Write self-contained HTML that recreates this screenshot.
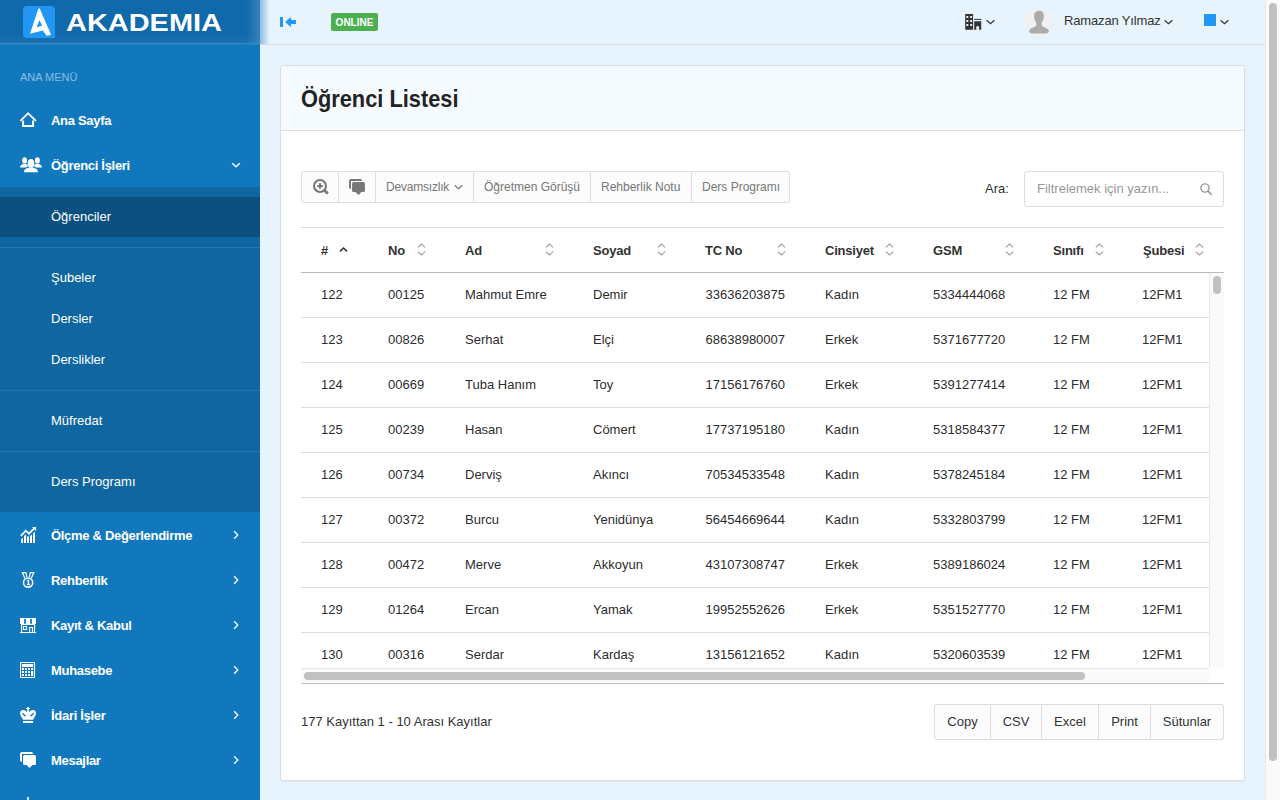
<!DOCTYPE html>
<html lang="tr">
<head>
<meta charset="utf-8">
<title>Öğrenci Listesi</title>
<style>
*{box-sizing:border-box;margin:0;padding:0}
html,body{width:1280px;height:800px;overflow:hidden}
body{font-family:"Liberation Sans",sans-serif;font-size:13px;color:#333;background:#e8f4fd;position:relative}
.abs{position:absolute}
/* ---------- sidebar ---------- */
#sidebar{position:absolute;left:0;top:0;width:260px;height:800px;background:#1278be;overflow:hidden}
#brand{position:absolute;left:0;top:0;width:260px;height:45px;background:linear-gradient(to bottom,#1069ab 0,#1069ab 35px,#1b73b1 43px,#3486c4 43px,#3486c4 44px,#2280c2 44px,#2280c2 45px)}
#brand .glow{position:absolute;right:0;top:0;width:14px;height:43px;background:linear-gradient(to right,rgba(80,150,200,0),rgba(80,150,200,.55))}
#logo{position:absolute;left:23px;top:6px;width:32px;height:32px;background:#2196f3;border-radius:4px 4px 0 4px}
#btxt{position:absolute;left:66px;top:6px}
.navlabel{position:absolute;left:20px;top:70px;font-size:11px;line-height:14px;color:rgba(255,255,255,.5);letter-spacing:0}
.item{position:absolute;left:0;width:260px;height:44px;color:#fff;font-weight:bold;font-size:13px;line-height:46px;padding-left:51px;white-space:nowrap;letter-spacing:-.3px}
.item svg.ic{position:absolute;left:20px;top:14px}
.item svg.ch{position:absolute;left:231px;top:18px}
.item svg.ch.r{left:232px;top:17px}
#sub{position:absolute;left:0;top:187px;width:260px;height:325px;background:rgba(0,0,0,.15)}
.sitem{position:absolute;left:0;width:260px;height:40px;line-height:40px;padding-left:51px;color:#fff;font-size:13px;white-space:nowrap}
.sitem.act{background:rgba(0,0,0,.21)}
.sdiv{position:absolute;left:0;width:260px;height:1px;background:rgba(255,255,255,.1)}
/* ---------- navbar ---------- */
#navbar{position:absolute;left:260px;top:0;width:1005px;height:45px;border-bottom:1px solid #ddd;background:#e8f4fd}
#navshadow{position:absolute;left:260px;top:0;width:10px;height:44px;background:linear-gradient(to right,rgba(110,170,225,.75),rgba(110,170,225,0))}
.badge{position:absolute;left:331px;top:13px;width:47px;height:18px;background:#4caf50;border-radius:2px;color:#fff;font-size:10px;font-weight:bold;line-height:20px;text-align:center}
#avatar{left:1025px;top:8px;width:28px;height:28px}
/* ---------- page scrollbar ---------- */
#pscroll{position:absolute;left:1265px;top:0;width:15px;height:800px;background:#fafafa;border-left:1px solid #e8e8e8}
#pscroll i{position:absolute;left:3px;top:3px;width:8px;height:758px;border-radius:4px;background:#c1c1c1}
/* ---------- panel ---------- */
#panel{position:absolute;left:280px;top:65px;width:965px;height:716px;background:#fff;border:1px solid #ddd;border-radius:3px;box-shadow:0 1px 1px rgba(0,0,0,.05)}
#phead{position:absolute;left:0;top:0;width:963px;height:65px;background:#f4fafe;border-bottom:1px solid #ddd;border-radius:3px 3px 0 0}
#ptitle{position:absolute;left:20px;top:17px;font-size:24px;line-height:32px;font-weight:bold;color:#222;white-space:nowrap;transform:scaleX(.908);transform-origin:0 0}

/* ---------- toolbar ---------- */
.tb{position:absolute;top:171px;height:32px;background:#fcfcfc;border:1px solid #ddd;border-left:0;font-size:12px;line-height:30px;color:#777;white-space:nowrap;text-align:left;padding-left:10px}
.tb.first{border-left:1px solid #ddd;border-radius:3px 0 0 3px}
.tb.last{border-radius:0 3px 3px 0}
.tb svg{position:absolute}
#srch{position:absolute;left:1024px;top:171px;width:200px;height:36px;border:1px solid #ddd;border-radius:3px;background:#fff;font-size:13px;line-height:34px;color:#999;padding-left:12px;white-space:nowrap}
/* ---------- table ---------- */
#ttop{position:absolute;left:301px;top:227px;width:923px;height:1px;background:#ddd}
#thb{position:absolute;left:301px;top:272px;width:923px;height:1px;background:#bbb}
.th{position:absolute;top:228px;height:44px;line-height:45px;font-weight:bold;font-size:13px;color:#333;white-space:nowrap;letter-spacing:-.2px}
.srt{position:absolute;top:243px}
#tbody{position:absolute;left:301px;top:273px;width:908px;height:395px;overflow:hidden;background:#fff}
.tr{position:absolute;left:0;width:908px;height:45px;border-bottom:1px solid #ddd}
.td{position:absolute;top:0;line-height:43px;font-size:13px;color:#2d2d2d;white-space:nowrap}
#vs{position:absolute;left:1209px;top:273px;width:15px;height:395px;background:#fafafa;border-left:1px solid #e8e8e8}
#vs i{position:absolute;left:3px;top:3px;width:8px;height:18px;border-radius:4px;background:#c1c1c1}
#hs{position:absolute;left:301px;top:668px;width:908px;height:15px;background:#fafafa;border-top:1px solid #e8e8e8}
#hs i{position:absolute;left:3px;top:3px;width:781px;height:8px;border-radius:4px;background:#c1c1c1}
#tbot{position:absolute;left:301px;top:683px;width:923px;height:1px;background:#bbb}
#info{position:absolute;left:301px;top:713px;line-height:18px;font-size:13px;color:#333;white-space:nowrap}
.fb{position:absolute;top:704px;height:36px;background:#fcfcfc;border:1px solid #ddd;border-left:0;font-size:13px;line-height:34px;color:#333;text-align:center;white-space:nowrap}
.fb.first{border-left:1px solid #ddd;border-radius:3px 0 0 3px}
.fb.last{border-radius:0 3px 3px 0}
</style>
</head>
<body>
<div id="sidebar">
  <div id="brand"><div class="glow"></div><div id="logo"><svg width="32" height="32" viewBox="0 0 32 32"><path fill="#fff" fill-rule="evenodd" d="M15.3 2.8 L7 27.75 L19.8 24.4 L23.9 30.1 L28.1 28.7 L16.6 2.3 Z M16.4 14.2 L13.6 21.2 L19.2 19.8 Z"/></svg></div><svg id="btxt" width="170" height="30" viewBox="0 0 170 30"><text x="0" y="24.6" font-family="Liberation Sans, sans-serif" font-weight="bold" font-size="24.2" fill="#fff" textLength="156" lengthAdjust="spacingAndGlyphs">AKADEMIA</text></svg></div>
  <div class="navlabel">ANA MENÜ</div>

  <div class="item" style="top:98px"><svg class="ic" width="17" height="16" viewBox="0 0 17 16"><path d="M0.3 8.9 L8.1 1.3 L15.9 8.9" stroke="#fff" stroke-width="1.8" fill="none"/><path d="M3.1 8.4 V14 H13.1 V8.4" stroke="#fff" stroke-width="2" fill="none"/></svg>Ana Sayfa</div>
  <div class="item" style="top:143px"><svg class="ic" width="22" height="16" viewBox="0 0 22 16"><g fill="#fff"><ellipse cx="4.6" cy="3.4" rx="2.4" ry="3.2"/><path d="M0 10.5 C0 8.2 2 7.6 3.3 7 L5.9 7 C7 7.5 8 7.8 8 9 L6 10.5 Z"/><ellipse cx="17.4" cy="3.4" rx="2.4" ry="3.2"/><path d="M22 10.5 C22 8.2 20 7.6 18.7 7 L16.1 7 C15 7.5 14 7.8 14 9 L16 10.5 Z"/><ellipse cx="11" cy="6.3" rx="3.3" ry="4.4"/><path d="M4 15.2 C4 11.8 6.5 11.4 9 10.4 L13 10.4 C15.5 11.4 18 11.8 18 15.2 Z"/></g></svg>Öğrenci İşleri<svg class="ch" width="10" height="8" viewBox="0 0 10 8"><path d="M1.2 2.2 L5 5.8 L8.8 2.2" stroke="#fff" stroke-width="1.3" fill="none"/></svg></div>
  <div id="sub">
    <div class="sitem act" style="top:10px">Öğrenciler</div>
    <div class="sdiv" style="top:60px"></div>
    <div class="sitem" style="top:71px">Şubeler</div>
    <div class="sitem" style="top:112px">Dersler</div>
    <div class="sitem" style="top:153px">Derslikler</div>
    <div class="sdiv" style="top:203px"></div>
    <div class="sitem" style="top:214px">Müfredat</div>
    <div class="sdiv" style="top:264px"></div>
    <div class="sitem" style="top:275px">Ders Programı</div>
  </div>
  <div class="item" style="top:513px"><svg class="ic" width="17" height="16" viewBox="0 0 17 16"><g fill="#fff"><path d="M1 12.4 L3 10.6 V16 H1Z"/><path d="M4 9.1 L6 7.6 V16 H4Z"/><path d="M7 8.8 L9 10 V16 H7Z"/><path d="M10 9.1 L12 7.6 V16 H10Z"/><path d="M13 6.4 L15 4.6 V16 H13Z"/><path d="M12 0 H16.1 V4.1 Z"/></g><path d="M0.8 8.9 L5.9 3.6 L8.9 6.7 L14 1.6" stroke="#fff" stroke-width="1.7" fill="none"/></svg>Ölçme &amp; Değerlendirme<svg class="ch r" width="8" height="10" viewBox="0 0 8 10"><path d="M2.2 1.2 L5.8 5 L2.2 8.8" stroke="#fff" stroke-width="1.3" fill="none"/></svg></div>
  <div class="item" style="top:558px"><svg class="ic" width="17" height="17" viewBox="0 0 17 17"><circle cx="8.1" cy="10.6" r="4.6" stroke="#fff" stroke-width="1.5" fill="none"/><path d="M2.3 0.6 L4.9 6.3 M5.9 0.6 L6.9 5.2 M13.9 0.6 L11.3 6.3 M10.3 0.6 L9.3 5.2" stroke="#fff" stroke-width="1.2" fill="none"/><path d="M1.8 0.7 H6.3 M9.9 0.7 H14.4" stroke="#fff" stroke-width="1.2"/><path d="M6.9 9.2 L8.5 8.3 V12.6 M6.9 12.5 H10" stroke="#fff" stroke-width="1.3" fill="none"/></svg>Rehberlik<svg class="ch r" width="8" height="10" viewBox="0 0 8 10"><path d="M2.2 1.2 L5.8 5 L2.2 8.8" stroke="#fff" stroke-width="1.3" fill="none"/></svg></div>
  <div class="item" style="top:603px"><svg class="ic" width="17" height="17" viewBox="0 0 17 17"><g fill="#fff"><path fill-rule="evenodd" d="M0 1 H16 V7 H0 Z M4.1 2.1 H5.9 V6.7 H4.1 Z M10.1 2.1 H11.9 V6.7 H10.1 Z"/><rect x="1" y="7" width="1.1" height="8"/><rect x="14" y="7" width="1.1" height="8"/><rect x="1" y="7" width="14" height="1"/><path fill-rule="evenodd" d="M2.9 9 H7.1 V12.9 H2.9 Z M3.95 9.95 H6.05 V11.9 H3.95 Z"/><path d="M9.05 15 V9.9 H13.1 V15 H11.9 V11.1 H10.1 V15 Z"/><rect x="0" y="15" width="16" height="1.05"/></g></svg>Kayıt &amp; Kabul<svg class="ch r" width="8" height="10" viewBox="0 0 8 10"><path d="M2.2 1.2 L5.8 5 L2.2 8.8" stroke="#fff" stroke-width="1.3" fill="none"/></svg></div>
  <div class="item" style="top:648px"><svg class="ic" width="17" height="17" viewBox="0 0 17 17"><rect x="0.55" y="0.45" width="13.95" height="15" rx="0.7" stroke="#fff" stroke-width="1.1" fill="none"/><g fill="#fff"><rect x="2" y="2" width="11.1" height="3"/><rect x="2" y="6" width="2" height="1.9"/><rect x="5" y="6" width="2" height="1.9"/><rect x="8" y="6" width="2" height="1.9"/><rect x="11" y="6" width="2.1" height="1.9"/><rect x="2" y="9" width="2" height="1.9"/><rect x="5" y="9" width="2" height="1.9"/><rect x="8" y="9" width="2" height="1.9"/><rect x="11" y="9" width="2.1" height="5"/><rect x="2" y="12" width="2" height="2"/><rect x="5" y="12" width="2" height="2"/><rect x="8" y="12" width="2" height="2"/></g></svg>Muhasebe<svg class="ch r" width="8" height="10" viewBox="0 0 8 10"><path d="M2.2 1.2 L5.8 5 L2.2 8.8" stroke="#fff" stroke-width="1.3" fill="none"/></svg></div>
  <div class="item" style="top:693px"><svg class="ic" width="17" height="17" viewBox="0 0 17 17"><g fill="#fff"><path fill-rule="evenodd" d="M3.05 12.65 C2.4 10.4 0 9 0.05 6.2 C0.1 4.2 1.6 3.1 3.1 3.1 C4.7 3.1 5.9 3.9 6.7 5 L7.25 4.2 V2 H5.9 V0.95 H7.25 V0 H8.9 V0.95 H10 V2 H8.9 V4.2 L9.4 5 C10.2 3.9 11.4 3.1 13 3.1 C14.5 3.1 16 4.2 16.05 6.2 C16.1 9 13.7 10.4 13.05 12.65 Z M2.91 5.74 L6.06 8.74 L5.14 9.66 L1.99 6.66 Z M13.19 5.74 L10.04 8.74 L10.96 9.66 L14.11 6.66 Z"/><rect x="3.05" y="14" width="10.05" height="1.95"/></g></svg>İdari İşler<svg class="ch r" width="8" height="10" viewBox="0 0 8 10"><path d="M2.2 1.2 L5.8 5 L2.2 8.8" stroke="#fff" stroke-width="1.3" fill="none"/></svg></div>
  <div class="item" style="top:738px"><svg class="ic" width="17" height="17" viewBox="0 0 17 17"><g fill="#fff"><path d="M2 0 H11.3 Q13 0 13.1 2 H2 V10 Q0 10 0 8 V2 Q0 0 2 0 Z"/><rect x="3.05" y="3.05" width="12.9" height="9.95" rx="1.6"/><path d="M6.5 12.9 L9.5 16.1 L12.4 12.9 Z"/></g></svg>Mesajlar<svg class="ch r" width="8" height="10" viewBox="0 0 8 10"><path d="M2.2 1.2 L5.8 5 L2.2 8.8" stroke="#fff" stroke-width="1.3" fill="none"/></svg></div>
  <div class="item" style="top:783px"><svg class="ic" width="16" height="16" viewBox="0 0 16 16"><rect x="7.2" y="0" width="1.6" height="6" fill="#fff"/></svg></div>
</div>
<div id="navbar"></div>
<div id="navshadow"></div>
<svg class="abs" style="left:280px;top:17px" width="17" height="10" viewBox="0 0 17 10"><g fill="#2196f3"><rect x="0" y="0" width="3" height="10"/><path d="M5.1 5.05 L10.95 0 V3.05 H16.05 V6.95 H10.95 V10.1 Z"/></g></svg>
<div class="badge">ONLINE</div>
<svg class="abs" style="left:965px;top:14px" width="17" height="16" viewBox="0 0 17 16"><g fill="#333"><path fill-rule="evenodd" d="M0.2 0.1 H8.1 V15.8 H0.2 Z M1.4 2.1 H3.3 V4.1 H1.4 Z M5.2 2.1 H7.1 V4.1 H5.2 Z M1.4 6.1 H3.3 V8.1 H1.4 Z M5.2 6.1 H7.1 V8.1 H5.2 Z M1.4 10.1 H3.3 V12.1 H1.4 Z M5.2 10.1 H7.1 V12.1 H5.2 Z"/><rect x="9.2" y="4.9" width="7" height="1"/><path d="M9.2 7.3 H16.2 V15.8 H14.1 V12.2 H11.3 V15.8 H9.2 Z"/></g></svg>
<svg class="abs chev" style="left:986px;top:19px" width="9" height="6" viewBox="0 0 9 6"><path d="M0.6 1.3 L4.5 4.7 L8.4 1.3" stroke="#333" stroke-width="1.2" fill="none"/></svg>
<div class="abs" id="avatar"><svg width="28" height="28" viewBox="0 0 28 28"><defs><clipPath id="avc"><circle cx="14" cy="14" r="14"/></clipPath></defs><circle cx="14" cy="14" r="14" fill="#f1f1f1"/><g clip-path="url(#avc)"><path fill="#acacac" d="M14 2.7 C17.4 2.7 18.9 5 18.9 8.2 C18.9 11 18 13.4 16.6 14.8 C16.5 17.2 16.7 18.2 18.6 19 C21 20 23.6 20.8 23.9 23.4 C23.9 24.6 23 25.5 21.5 25.5 H6.5 C5 25.5 4.1 24.6 4.1 23.4 C4.4 20.8 7 20 9.4 19 C11.3 18.2 11.5 17.2 11.4 14.8 C10 13.4 9.1 11 9.1 8.2 C9.1 5 10.6 2.7 14 2.7 Z"/></g></svg></div>
<div class="abs" style="left:1064px;top:12px;line-height:18px;font-size:13px;color:#333;white-space:nowrap;letter-spacing:-.15px">Ramazan Yılmaz</div>
<svg class="abs chev" style="left:1164px;top:19px" width="9" height="6" viewBox="0 0 9 6"><path d="M0.6 1.3 L4.5 4.7 L8.4 1.3" stroke="#333" stroke-width="1.2" fill="none"/></svg>
<div class="abs" style="left:1204px;top:14px;width:12px;height:12px;background:#2196f3"></div>
<svg class="abs chev" style="left:1220px;top:19px" width="9" height="6" viewBox="0 0 9 6"><path d="M0.6 1.3 L4.5 4.7 L8.4 1.3" stroke="#333" stroke-width="1.2" fill="none"/></svg>
<div id="pscroll"><i></i></div>
<div id="panel">
  <div id="phead"><div id="ptitle">Öğrenci Listesi</div></div>
</div>
<div class="tb first" style="left:301px;width:38px"><svg style="left:11px;top:7px" width="17" height="17" viewBox="0 0 17 17"><circle cx="7" cy="7" r="5.95" stroke="#777" stroke-width="2.1" fill="none"/><path d="M11.2 11.2 L14.9 14.6" stroke="#777" stroke-width="2.7"/><path d="M7 4.2 V9.8 M4.2 7 H9.8" stroke="#777" stroke-width="2"/></svg></div>
<div class="tb" style="left:339px;width:37px"><svg style="left:10px;top:7px" width="17" height="17" viewBox="0 0 17 17"><g fill="#777"><path d="M2 0 H11.3 Q13 0 13.1 2 H2 V10 Q0 10 0 8 V2 Q0 0 2 0 Z"/><rect x="3.05" y="3.05" width="12.9" height="9.95" rx="1.6"/><path d="M6.5 12.9 L9.5 16.1 L12.4 12.9 Z"/></g></svg></div>
<div class="tb" style="left:376px;width:98px"><span style="letter-spacing:-.2px">Devamsızlık</span><svg style="left:77.5px;top:12px" width="9" height="6" viewBox="0 0 9 6"><path d="M0.6 1.3 L4.5 4.7 L8.4 1.3" stroke="#777" stroke-width="1.2" fill="none"/></svg></div>
<div class="tb" style="left:474px;width:117px">Öğretmen Görüşü</div>
<div class="tb" style="left:591px;width:101px">Rehberlik Notu</div>
<div class="tb last" style="left:692px;width:98px">Ders Programı</div>
<div class="abs" style="left:985px;top:180px;line-height:18px;font-size:13px;color:#333">Ara:</div>
<div id="srch">Filtrelemek için yazın...<svg class="abs" style="left:175px;top:11px" width="12.5" height="12.5" viewBox="0 0 14 14"><circle cx="5.6" cy="5.6" r="4.6" stroke="#999" stroke-width="1.6" fill="none"/><path d="M9 9 L12.6 12.6" stroke="#999" stroke-width="1.9" stroke-linecap="round"/></svg></div>
<div id="ttop"></div>
<div class="th" style="left:321px">#</div>
<div class="th" style="left:388px">No</div>
<svg class="srt" style="left:416.5px" width="9" height="13" viewBox="0 0 9 13"><path d="M0.8 4.4 L4.5 1 L8.2 4.4 M0.8 8.6 L4.5 12 L8.2 8.6" stroke="#a0a0a0" stroke-width="1.1" fill="none"/></svg>
<div class="th" style="left:465px">Ad</div>
<svg class="srt" style="left:544.5px" width="9" height="13" viewBox="0 0 9 13"><path d="M0.8 4.4 L4.5 1 L8.2 4.4 M0.8 8.6 L4.5 12 L8.2 8.6" stroke="#a0a0a0" stroke-width="1.1" fill="none"/></svg>
<div class="th" style="left:593px">Soyad</div>
<svg class="srt" style="left:656.5px" width="9" height="13" viewBox="0 0 9 13"><path d="M0.8 4.4 L4.5 1 L8.2 4.4 M0.8 8.6 L4.5 12 L8.2 8.6" stroke="#a0a0a0" stroke-width="1.1" fill="none"/></svg>
<div class="th" style="left:705px">TC No</div>
<svg class="srt" style="left:776.5px" width="9" height="13" viewBox="0 0 9 13"><path d="M0.8 4.4 L4.5 1 L8.2 4.4 M0.8 8.6 L4.5 12 L8.2 8.6" stroke="#a0a0a0" stroke-width="1.1" fill="none"/></svg>
<div class="th" style="left:825px">Cinsiyet</div>
<svg class="srt" style="left:884.5px" width="9" height="13" viewBox="0 0 9 13"><path d="M0.8 4.4 L4.5 1 L8.2 4.4 M0.8 8.6 L4.5 12 L8.2 8.6" stroke="#a0a0a0" stroke-width="1.1" fill="none"/></svg>
<div class="th" style="left:933px">GSM</div>
<svg class="srt" style="left:1004.5px" width="9" height="13" viewBox="0 0 9 13"><path d="M0.8 4.4 L4.5 1 L8.2 4.4 M0.8 8.6 L4.5 12 L8.2 8.6" stroke="#a0a0a0" stroke-width="1.1" fill="none"/></svg>
<div class="th" style="left:1053px">Sınıfı</div>
<svg class="srt" style="left:1094.5px" width="9" height="13" viewBox="0 0 9 13"><path d="M0.8 4.4 L4.5 1 L8.2 4.4 M0.8 8.6 L4.5 12 L8.2 8.6" stroke="#a0a0a0" stroke-width="1.1" fill="none"/></svg>
<div class="th" style="left:1143px">Şubesi</div>
<svg class="srt" style="left:1194.5px" width="9" height="13" viewBox="0 0 9 13"><path d="M0.8 4.4 L4.5 1 L8.2 4.4 M0.8 8.6 L4.5 12 L8.2 8.6" stroke="#a0a0a0" stroke-width="1.1" fill="none"/></svg>
<svg class="abs" style="left:339px;top:246px" width="9" height="7" viewBox="0 0 9 7"><path d="M1 5.4 L4.5 2 L8 5.4" stroke="#333" stroke-width="1.5" fill="none"/></svg>
<div id="thb"></div>
<div id="tbody">
<div class="tr" style="top:0px"><div class="td" style="left:20px">122</div><div class="td" style="left:87px">00125</div><div class="td" style="left:164px">Mahmut Emre</div><div class="td" style="left:292px">Demir</div><div class="td" style="left:404.5px">33636203875</div><div class="td" style="left:524px">Kadın</div><div class="td" style="left:632px">5334444068</div><div class="td" style="left:752px">12 FM</div><div class="td" style="left:841px">12FM1</div></div>
<div class="tr" style="top:45px"><div class="td" style="left:20px">123</div><div class="td" style="left:87px">00826</div><div class="td" style="left:164px">Serhat</div><div class="td" style="left:292px">Elçi</div><div class="td" style="left:404.5px">68638980007</div><div class="td" style="left:524px">Erkek</div><div class="td" style="left:632px">5371677720</div><div class="td" style="left:752px">12 FM</div><div class="td" style="left:841px">12FM1</div></div>
<div class="tr" style="top:90px"><div class="td" style="left:20px">124</div><div class="td" style="left:87px">00669</div><div class="td" style="left:164px">Tuba Hanım</div><div class="td" style="left:292px">Toy</div><div class="td" style="left:404.5px">17156176760</div><div class="td" style="left:524px">Erkek</div><div class="td" style="left:632px">5391277414</div><div class="td" style="left:752px">12 FM</div><div class="td" style="left:841px">12FM1</div></div>
<div class="tr" style="top:135px"><div class="td" style="left:20px">125</div><div class="td" style="left:87px">00239</div><div class="td" style="left:164px">Hasan</div><div class="td" style="left:292px">Cömert</div><div class="td" style="left:404.5px">17737195180</div><div class="td" style="left:524px">Kadın</div><div class="td" style="left:632px">5318584377</div><div class="td" style="left:752px">12 FM</div><div class="td" style="left:841px">12FM1</div></div>
<div class="tr" style="top:180px"><div class="td" style="left:20px">126</div><div class="td" style="left:87px">00734</div><div class="td" style="left:164px">Derviş</div><div class="td" style="left:292px">Akıncı</div><div class="td" style="left:404.5px">70534533548</div><div class="td" style="left:524px">Kadın</div><div class="td" style="left:632px">5378245184</div><div class="td" style="left:752px">12 FM</div><div class="td" style="left:841px">12FM1</div></div>
<div class="tr" style="top:225px"><div class="td" style="left:20px">127</div><div class="td" style="left:87px">00372</div><div class="td" style="left:164px">Burcu</div><div class="td" style="left:292px">Yenidünya</div><div class="td" style="left:404.5px">56454669644</div><div class="td" style="left:524px">Kadın</div><div class="td" style="left:632px">5332803799</div><div class="td" style="left:752px">12 FM</div><div class="td" style="left:841px">12FM1</div></div>
<div class="tr" style="top:270px"><div class="td" style="left:20px">128</div><div class="td" style="left:87px">00472</div><div class="td" style="left:164px">Merve</div><div class="td" style="left:292px">Akkoyun</div><div class="td" style="left:404.5px">43107308747</div><div class="td" style="left:524px">Erkek</div><div class="td" style="left:632px">5389186024</div><div class="td" style="left:752px">12 FM</div><div class="td" style="left:841px">12FM1</div></div>
<div class="tr" style="top:315px"><div class="td" style="left:20px">129</div><div class="td" style="left:87px">01264</div><div class="td" style="left:164px">Ercan</div><div class="td" style="left:292px">Yamak</div><div class="td" style="left:404.5px">19952552626</div><div class="td" style="left:524px">Erkek</div><div class="td" style="left:632px">5351527770</div><div class="td" style="left:752px">12 FM</div><div class="td" style="left:841px">12FM1</div></div>
<div class="tr" style="top:360px"><div class="td" style="left:20px">130</div><div class="td" style="left:87px">00316</div><div class="td" style="left:164px">Serdar</div><div class="td" style="left:292px">Kardaş</div><div class="td" style="left:404.5px">13156121652</div><div class="td" style="left:524px">Kadın</div><div class="td" style="left:632px">5320603539</div><div class="td" style="left:752px">12 FM</div><div class="td" style="left:841px">12FM1</div></div>
</div>
<div id="vs"><i></i></div><div id="hs"><i></i></div><div class="abs" style="left:1209px;top:668px;width:15px;height:15px;background:#fff"></div><div id="tbot"></div>
<div id="info">177 Kayıttan 1 - 10 Arası Kayıtlar</div>
<div class="fb first" style="left:934px;width:57px">Copy</div>
<div class="fb " style="left:991px;width:51px">CSV</div>
<div class="fb " style="left:1042px;width:57px">Excel</div>
<div class="fb " style="left:1099px;width:52px">Print</div>
<div class="fb last" style="left:1151px;width:73px">Sütunlar</div>
</body>
</html>
